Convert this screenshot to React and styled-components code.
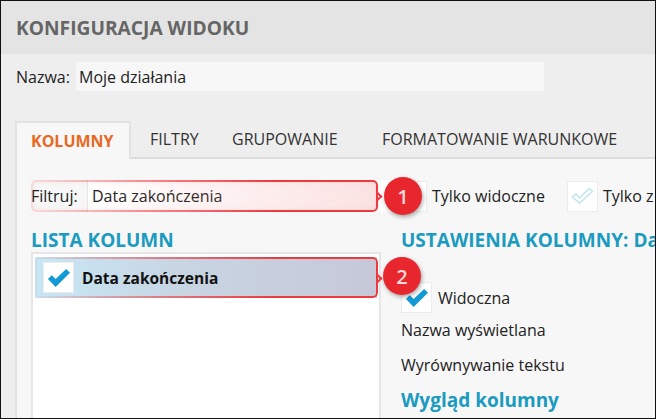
import React from "react";
import styled, { createGlobalStyle } from "styled-components";

const Global = createGlobalStyle`
  html, body { margin: 0; padding: 0; }
  body { font-family: "Open Sans", "Noto Sans", sans-serif; color: #222; }
  * { box-sizing: border-box; }
`;

const Frame = styled.div`
  width: 656px;
  height: 419px;
  overflow: hidden;
  background: #eeeeee;
  border: 1px solid #111;
`;

const Header = styled.div`
  height: 53px;
  padding-left: 15px;
  display: flex;
  align-items: center;
  background: #e4e4e4;
  color: #666;
  font-size: 19.2px;
  font-weight: 700;
`;

const NameRow = styled.div`
  display: flex;
  align-items: center;
  height: 29px;
  margin-top: 8px;
  padding-left: 15px;
  font-size: 16px;
`;

const NameLabel = styled.span`
  width: 60px;
`;

const NameInput = styled.div`
  width: 468px;
  height: 29px;
  padding-left: 3px;
  display: flex;
  align-items: center;
  background: #f7f7f7;
`;

const Tabs = styled.div`
  display: flex;
  align-items: stretch;
  height: 38px;
  margin: 30px 0 0 14px;
  border-bottom: 2px solid #dcdcdc;
  font-size: 16px;
`;

const Tab = styled.div`
  flex: none;
  display: flex;
  align-items: center;
  height: ${(p) => (p.$active ? "38px" : "36px")};
  width: ${(p) => p.$w}px;
  padding-left: ${(p) => p.$pl}px;
  white-space: nowrap;
  color: ${(p) => (p.$active ? "#e8691f" : "#333")};
  font-weight: ${(p) => (p.$active ? 700 : 400)};
  background: ${(p) => (p.$active ? "#f7f7f7" : "transparent")};
  ${(p) => p.$active && "border: 2px solid #e2e2e2; border-bottom: none;"}
`;

const Panel = styled.div`
  position: relative;
  margin-left: 14px;
  height: 260px;
  padding: 21px 0 0 14px;
  background: #f7f7f7;
  border-left: 2px solid #e2e2e2;
  font-size: 16px;
`;

const FilterRow = styled.div`
  position: relative;
  display: flex;
  align-items: center;
  height: 32px;
`;

const FilterLabel = styled.span`
  flex: none;
  width: 56px;
`;

const FilterValue = styled.span`
  flex: none;
  width: 309px;
  height: 32px;
  line-height: 32px;
  padding-left: 4px;
  background: #fff;
  border-left: 1px solid #e6e6e6;
`;

const Check = styled.span`
  flex: none;
  display: flex;
  align-items: center;
  justify-content: center;
  width: 31px;
  height: 31px;
  background: #fff;
  border: 1px solid #ececec;
`;

const Tick = ({ faded }) => (
  <svg width="23" height="20" viewBox="0 0 24 20">
    {faded ? (
      <path
        d="M1.5 11 L5 8 L9 12 L19 2 L22.5 5 L9 17.5 Z"
        fill="none"
        stroke="#c4e6f3"
        strokeWidth="1.6"
      />
    ) : (
      <path d="M1 11 L5 7 L9 11 L20 0.5 L24 4.5 L9 19.5 Z" fill="#129ad4" />
    )}
  </svg>
);

const OptionLabel = styled.span`
  flex: none;
  margin: 0 ${(p) => p.$after || 0}px 0 ${(p) => p.$before || 5}px;
  white-space: nowrap;
`;

const Callout = styled.div`
  position: absolute;
  left: ${(p) => p.$left}px;
  top: ${(p) => p.$top}px;
  width: ${(p) => p.$w}px;
  height: ${(p) => p.$h}px;
  border-radius: 5px;
  background: ${(p) => p.$fill || "transparent"};
  box-shadow: ${(p) => p.$glow || "none"};
  &::before {
    content: "";
    position: absolute;
    inset: 0;
    padding: 2px;
    border-radius: 5px;
    background: linear-gradient(
      90deg,
      rgba(238, 58, 63, 0.06) 0%,
      rgba(238, 58, 63, 0.5) 30%,
      #ee3a3f 70%
    );
    mask: linear-gradient(#000 0 0) content-box, linear-gradient(#000 0 0);
    mask-composite: exclude;
  }
  &::after {
    content: "";
    position: absolute;
    right: -3px;
    top: 50%;
    width: 5px;
    height: 5px;
    margin-top: -3px;
    border-top: 2px solid #ee3a3f;
    border-right: 2px solid #ee3a3f;
    transform: rotate(45deg);
  }
`;

const Badge = styled.div`
  position: absolute;
  left: ${(p) => p.$left}px;
  top: ${(p) => p.$top}px;
  width: 38px;
  height: 38px;
  border-radius: 50%;
  display: flex;
  align-items: center;
  justify-content: center;
  background: #e8262d;
  color: #f6d8d8;
  font-size: 20px;
  font-weight: 600;
  box-shadow: 1px 2px 4px rgba(0, 0, 0, 0.35);
`;

const Columns = styled.div`
  display: flex;
  margin-top: 18px;
`;

const ListColumn = styled.div`
  width: 350px;
  flex: none;
`;

const SettingsColumn = styled.div`
  margin-left: 20px;
  white-space: nowrap;
`;

const Heading = styled.div`
  margin-top: ${(p) => p.$mt || 0}px;
  color: #1a9bbf;
  font-size: 19px;
  font-weight: 700;
  line-height: 20px;
`;

const ListBox = styled.div`
  position: relative;
  height: 170px;
  margin-top: 2px;
  padding: 3px 2px;
  background: #fff;
  border: 2px solid #e6e6e6;
`;

const ListRow = styled.div`
  display: flex;
  align-items: center;
  height: 41px;
  padding-left: 8px;
  background: linear-gradient(90deg, #c7e7f5 0%, #c8d4e2 45%, #c6c8d8 100%);
  font-weight: 700;
  color: #111;
`;

const RowText = styled.span`
  margin-left: 8px;
  font-size: 15.5px;
`;

const CheckLine = styled.div`
  display: flex;
  align-items: center;
  margin-top: 32px;
`;

const Line = styled.div`
  height: 20px;
  line-height: 20px;
  margin-top: ${(p) => p.$mt}px;
`;

export default function App() {
  return (
    <>
      <Global />
      <Frame>
        <Header>KONFIGURACJA WIDOKU</Header>
        <NameRow>
          <NameLabel>Nazwa:</NameLabel>
          <NameInput>Moje działania</NameInput>
        </NameRow>
        <Tabs>
          <Tab $active $w={116} $pl={14}>KOLUMNY</Tab>
          <Tab $w={83} $pl={19}>FILTRY</Tab>
          <Tab $w={168} $pl={18}>GRUPOWANIE</Tab>
          <Tab $w={280} $pl={0}>FORMATOWANIE WARUNKOWE</Tab>
        </Tabs>
        <Panel>
          <FilterRow>
            <FilterLabel>Filtruj:</FilterLabel>
            <FilterValue>Data zakończenia</FilterValue>
            <Check />
            <OptionLabel $after={22}>Tylko widoczne</OptionLabel>
            <Check><Tick faded /></Check>
            <OptionLabel>Tylko z</OptionLabel>
            <Callout
              $left={0}
              $top={0}
              $w={347}
              $h={32}
              $fill="linear-gradient(90deg, rgba(255,120,120,0) 15%, rgba(240,150,150,.28) 100%)"
              $glow="inset 0 0 6px rgba(255,80,80,.22)"
            />
            <Badge $left={353} $top={-3}>1</Badge>
          </FilterRow>
          <Columns>
            <ListColumn>
              <Heading>LISTA KOLUMN</Heading>
              <ListBox>
                <ListRow>
                  <Check><Tick /></Check>
                  <RowText>Data zakończenia</RowText>
                </ListRow>
                <Callout $left={2} $top={3} $w={343} $h={41} />
                <Badge $left={350} $top={3}>2</Badge>
              </ListBox>
            </ListColumn>
            <SettingsColumn>
              <Heading>USTAWIENIA KOLUMNY: Da</Heading>
              <CheckLine>
                <Check><Tick /></Check>
                <OptionLabel $before={6}>Widoczna</OptionLabel>
              </CheckLine>
              <Line $mt={7}>Nazwa wyświetlana</Line>
              <Line $mt={15}>Wyrównywanie tekstu</Line>
              <Heading $mt={15}>Wygląd kolumny</Heading>
            </SettingsColumn>
          </Columns>
        </Panel>
      </Frame>
    </>
  );
}
